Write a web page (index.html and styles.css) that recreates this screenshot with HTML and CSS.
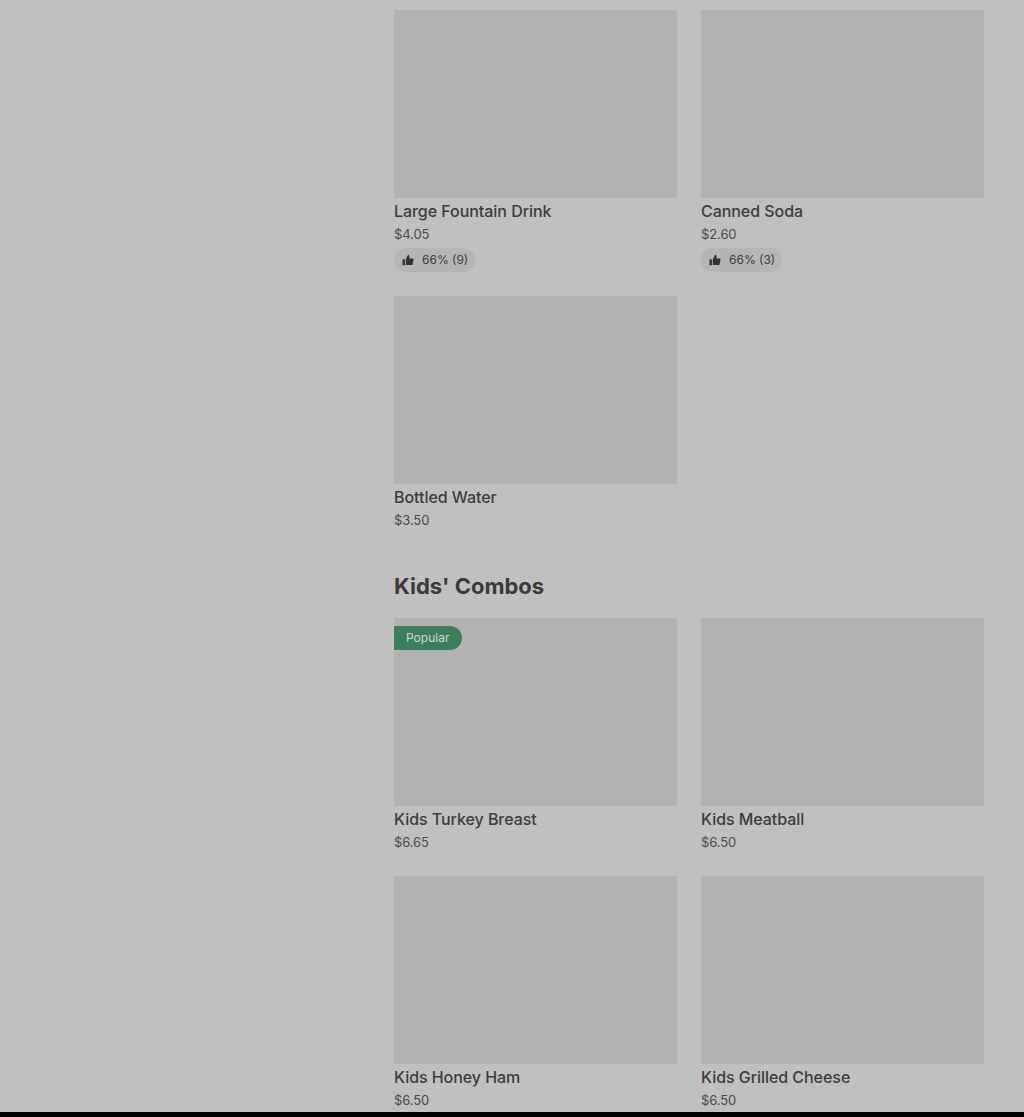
FILE: index.html
```html
<!DOCTYPE html>
<html lang="en">
<head>
<meta charset="utf-8">
<title>Menu</title>
<link rel="stylesheet" href="styles.css">
</head>
<body>
<div class="page">
  <main class="menu">
    <section class="grid">
      <article class="item">
        <div class="tile"></div>
        <h3 class="name">Large Fountain Drink</h3>
        <p class="price">$4.05</p>
        <div class="rating"><svg class="thumb" viewBox="0 0 12 12"><path d="M0.5 5.2h2.4v6H0.5zM3.8 5.2 6 .8c.9 0 1.4.6 1.4 1.4v2.2h3.2c.6 0 1 .5.9 1.1l-.8 4.7c-.1.5-.5.9-1 .9H3.8z"/></svg><span>66% (9)</span></div>
      </article>
      <article class="item">
        <div class="tile"></div>
        <h3 class="name">Canned Soda</h3>
        <p class="price">$2.60</p>
        <div class="rating"><svg class="thumb" viewBox="0 0 12 12"><path d="M0.5 5.2h2.4v6H0.5zM3.8 5.2 6 .8c.9 0 1.4.6 1.4 1.4v2.2h3.2c.6 0 1 .5.9 1.1l-.8 4.7c-.1.5-.5.9-1 .9H3.8z"/></svg><span>66% (3)</span></div>
      </article>
      <article class="item">
        <div class="tile"></div>
        <h3 class="name">Bottled Water</h3>
        <p class="price">$3.50</p>
      </article>
    </section>
    <h2 class="section-title">Kids' Combos</h2>
    <section class="grid">
      <article class="item">
        <div class="tile"><span class="badge">Popular</span></div>
        <h3 class="name">Kids Turkey Breast</h3>
        <p class="price">$6.65</p>
      </article>
      <article class="item">
        <div class="tile"></div>
        <h3 class="name">Kids Meatball</h3>
        <p class="price">$6.50</p>
      </article>
      <article class="item">
        <div class="tile"></div>
        <h3 class="name">Kids Honey Ham</h3>
        <p class="price">$6.50</p>
      </article>
      <article class="item">
        <div class="tile"></div>
        <h3 class="name">Kids Grilled Cheese</h3>
        <p class="price">$6.50</p>
      </article>
    </section>
  </main>
  <div class="footer-bar"></div>
</div>
</body>
</html>
```
FILE: styles.css
```css
* { box-sizing: border-box; }
html, body { margin: 0; padding: 0; height: 100%; overflow: hidden; }
body { background: #c0c0c0; color: #3c3c3c; font-family: Inter, "Liberation Sans", sans-serif; }
.page { height: 1117px; display: flex; flex-direction: column; }
.menu { flex: 1; min-height: 0; overflow: hidden; padding: 10px 40px 0 394px; }
.grid { display: grid; grid-template-columns: 283px 283px; column-gap: 24px; row-gap: 22px; }
.tile { position: relative; height: 188px; background: #b2b2b2; }
.name { margin: 2px 0 0; font-size: 16px; line-height: 22px; font-weight: 500; letter-spacing: -0.05px; color: #3c3c3c; }
.price { margin: 0; font-size: 13px; line-height: 24px; letter-spacing: -0.1px; color: #4a4a4a; }
.rating { display: inline-flex; align-items: center; gap: 8px; height: 24px; margin: 2px 0; padding: 0 7px 1px 8px; border-radius: 12px; background: #b5b5b5; font-size: 12px; color: #3c3c3c; }
.thumb { width: 12px; height: 12px; fill: #333; }
.section-title { margin: 38px 0 16px; font-size: 22px; line-height: 32px; font-weight: 700; color: #3a3a3a; }
.badge { position: absolute; left: 0; top: 8px; height: 24px; padding: 0 13px 1px 12px; display: flex; align-items: center; border-radius: 0 12px 12px 0; background: #3e7d5c; color: #c8dccf; font-size: 12px; }
.footer-bar { height: 5px; background: #000; flex: none; }
```
